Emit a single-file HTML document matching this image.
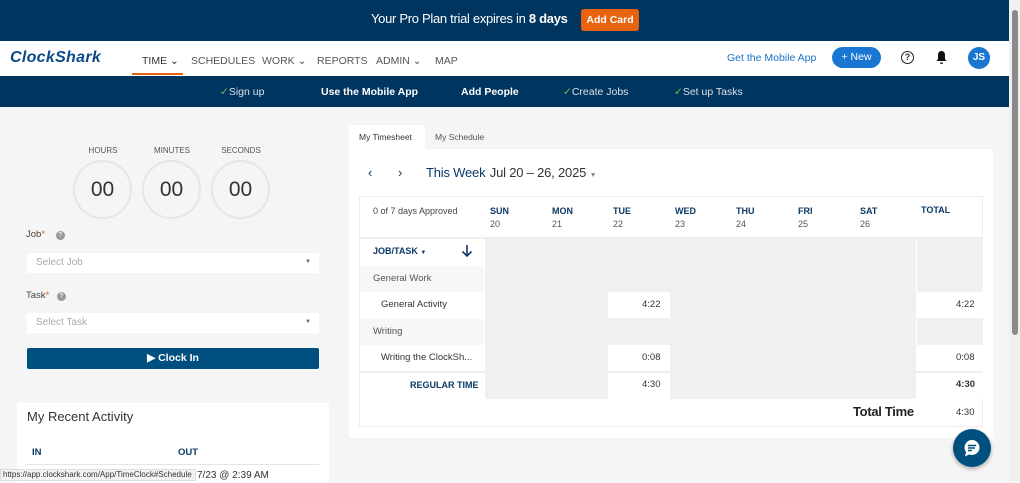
<!DOCTYPE html>
<html><head><meta charset="utf-8"><style>
*{box-sizing:border-box;margin:0;padding:0}
body{width:1020px;height:481px;overflow:hidden;background:#f5f5f5;font-family:"Liberation Sans",sans-serif;position:relative;color:#333}
.a{position:absolute}
.navy{background:#00355f}
.c{text-align:center}
.cell{position:absolute;background:#f0f0f0}
.w{background:#fff}
</style></head><body>
<div class="a navy" style="left:0;top:0;width:1009px;height:41px"></div>
<div class="a" style="left:371px;top:11px;font-size:13px;color:#fff;letter-spacing:-0.3px;white-space:nowrap">Your Pro Plan trial expires in <b>8 days</b></div>
<div class="a" style="left:581px;top:9px;width:58px;height:22px;background:#e8630f;border-radius:3px;color:#fff;font-size:10.5px;font-weight:bold;text-align:center;line-height:22px">Add Card</div>
<div class="a" style="left:0;top:41px;width:1009px;height:35px;background:#fff"></div>
<div class="a" style="left:10px;top:49px;font-size:16px;font-weight:bold;font-style:italic;color:#0b4a86;letter-spacing:0.3px">ClockShark</div>
<div class="a" style="left:142px;top:55px;font-size:10.5px;color:#333">TIME ⌄</div>
<div class="a" style="left:132px;top:73px;width:51px;height:2px;background:#e8630f"></div>
<div class="a" style="left:191px;top:55px;font-size:10.5px;color:#555">SCHEDULES</div>
<div class="a" style="left:262px;top:55px;font-size:10.5px;color:#555">WORK ⌄</div>
<div class="a" style="left:317px;top:55px;font-size:10.5px;color:#555">REPORTS</div>
<div class="a" style="left:376px;top:55px;font-size:10.5px;color:#555">ADMIN ⌄</div>
<div class="a" style="left:435px;top:55px;font-size:10.5px;color:#555">MAP</div>
<div class="a" style="left:727px;top:52px;font-size:10.5px;color:#1a73c8">Get the Mobile App</div>
<div class="a" style="left:832px;top:47px;width:49px;height:21px;border-radius:11px;background:#1976d2;color:#fff;font-size:10.5px;text-align:center;line-height:21px">+ New</div>
<div class="a" style="left:901px;top:51px;width:13px;height:13px;border:1.5px solid #222;border-radius:50%;font-size:9px;font-weight:bold;text-align:center;line-height:11px">?</div>
<svg class="a" style="left:935px;top:50px" width="13" height="15" viewBox="0 0 13 15"><path d="M6.5 1C4 1 3 3 3 5v4L1.5 11h10L10 9V5c0-2-1-4-3.5-4z M5 12.5h3a1.5 1.5 0 0 1-3 0z" fill="#111"/></svg>
<div class="a" style="left:968px;top:47px;width:22px;height:22px;border-radius:50%;background:#1976d2;color:#fff;font-size:10px;font-weight:bold;text-align:center;line-height:22px">JS</div>
<div class="a navy" style="left:0;top:76px;width:1009px;height:31px"></div>
<div class="a" style="left:220px;top:86px;font-size:10.5px;color:#d8e0ea"><span style="color:#6cc04a">✓</span>Sign up</div>
<div class="a" style="left:321px;top:86px;font-size:10.5px;color:#fff;font-weight:bold">Use the Mobile App</div>
<div class="a" style="left:461px;top:86px;font-size:10.5px;color:#fff;font-weight:bold">Add People</div>
<div class="a" style="left:563px;top:86px;font-size:10.5px;color:#d8e0ea"><span style="color:#6cc04a">✓</span>Create Jobs</div>
<div class="a" style="left:674px;top:86px;font-size:10.5px;color:#d8e0ea"><span style="color:#6cc04a">✓</span>Set up Tasks</div>
<div class="a" style="left:1009px;top:0;width:11px;height:481px;background:#f0f0f0"></div>
<div class="a" style="left:1012px;top:10px;width:6px;height:325px;background:#8a8a8a;border-radius:3px"></div>

<div class="a c" style="left:73px;top:146px;width:60px;font-size:8px;color:#555">HOURS</div>
<div class="a c" style="left:142px;top:146px;width:60px;font-size:8px;color:#555">MINUTES</div>
<div class="a c" style="left:211px;top:146px;width:60px;font-size:8px;color:#555">SECONDS</div>
<div class="a c" style="left:73px;top:160px;width:59px;height:59px;border:2px solid #e6e6e6;border-radius:50%;font-size:21px;line-height:55px">00</div>
<div class="a c" style="left:142px;top:160px;width:59px;height:59px;border:2px solid #e6e6e6;border-radius:50%;font-size:21px;line-height:55px">00</div>
<div class="a c" style="left:211px;top:160px;width:59px;height:59px;border:2px solid #e6e6e6;border-radius:50%;font-size:21px;line-height:55px">00</div>
<div class="a" style="left:26px;top:229px;font-size:9.5px;color:#444">Job<span style="color:#e8630f">*</span> <span style="display:inline-block;margin-left:8px;width:9px;height:9px;border-radius:50%;background:#999;color:#fff;font-size:7px;text-align:center;line-height:9px">?</span></div>
<div class="a" style="left:27px;top:253px;width:292px;height:20px;background:#fff;font-size:10px;color:#aaa;padding:4px 0 0 9px">Select Job<span style="position:absolute;right:8px;top:6px;font-size:6px;color:#666">▼</span></div>
<div class="a" style="left:26px;top:290px;font-size:9.5px;color:#444">Task<span style="color:#e8630f">*</span> <span style="display:inline-block;margin-left:5px;width:9px;height:9px;border-radius:50%;background:#999;color:#fff;font-size:7px;text-align:center;line-height:9px">?</span></div>
<div class="a" style="left:27px;top:313px;width:292px;height:20px;background:#fff;font-size:10px;color:#aaa;padding:4px 0 0 9px">Select Task<span style="position:absolute;right:8px;top:6px;font-size:6px;color:#666">▼</span></div>
<div class="a c" style="left:27px;top:348px;width:292px;height:21px;background:#00507f;border-radius:2px;color:#fff;font-size:10.5px;font-weight:bold;line-height:21px">▶ Clock In</div>
<div class="a" style="left:17px;top:403px;width:312px;height:80px;background:#fff"></div>
<div class="a" style="left:27px;top:409px;font-size:13px;color:#333">My Recent Activity</div>
<div class="a" style="left:32px;top:447px;font-size:9.5px;color:#0b3a66;font-weight:bold">IN</div>
<div class="a" style="left:178px;top:447px;font-size:9.5px;color:#0b3a66;font-weight:bold">OUT</div>
<div class="a" style="left:27px;top:464px;width:292px;height:1px;background:#e5e5e5"></div>
<div class="a" style="left:0;top:469px;width:196px;height:12px;background:#f3f3f3;border:1px solid #ddd;font-size:8px;color:#333;padding-left:2px;line-height:10px">https://app.clockshark.com/App/TimeClock#Schedule</div>
<div class="a" style="left:197px;top:470px;font-size:10px;color:#333">7/23 @ 2:39 AM</div>

<div class="a w" style="left:349px;top:125px;width:76px;height:25px;font-size:8.5px;color:#333;padding:7px 0 0 10px">My Timesheet</div>
<div class="a" style="left:435px;top:132px;font-size:8.5px;color:#555">My Schedule</div>
<div class="a w" style="left:349px;top:149px;width:644px;height:289px"></div>
<div class="a" style="left:368px;top:165px;font-size:13px;color:#0b3a66">‹</div>
<div class="a" style="left:398px;top:165px;font-size:13px;color:#0b3a66">›</div>
<div class="a" style="left:426px;top:165px;font-size:13px;color:#0b3a66;letter-spacing:-0.2px">This Week <span style="color:#333;margin-left:1px">Jul 20 – 26, 2025</span> <span style="font-size:7px;color:#888">▼</span></div>
<div class="a" style="left:359px;top:196px;width:624px;height:231px;border:1px solid #eee"></div>
<div class="a" style="left:373px;top:206px;font-size:9px;color:#444">0 of 7 days Approved</div>
<div class="a" style="left:490px;top:205px;font-size:9px;line-height:13px;color:#0b3a66"><b>SUN</b><br><span style="color:#555">20</span></div>
<div class="a" style="left:552px;top:205px;font-size:9px;line-height:13px;color:#0b3a66"><b>MON</b><br><span style="color:#555">21</span></div>
<div class="a" style="left:613px;top:205px;font-size:9px;line-height:13px;color:#0b3a66"><b>TUE</b><br><span style="color:#555">22</span></div>
<div class="a" style="left:675px;top:205px;font-size:9px;line-height:13px;color:#0b3a66"><b>WED</b><br><span style="color:#555">23</span></div>
<div class="a" style="left:736px;top:205px;font-size:9px;line-height:13px;color:#0b3a66"><b>THU</b><br><span style="color:#555">24</span></div>
<div class="a" style="left:798px;top:205px;font-size:9px;line-height:13px;color:#0b3a66"><b>FRI</b><br><span style="color:#555">25</span></div>
<div class="a" style="left:860px;top:205px;font-size:9px;line-height:13px;color:#0b3a66"><b>SAT</b><br><span style="color:#555">26</span></div>
<div class="a" style="left:921px;top:205px;font-size:9px;color:#0b3a66;font-weight:bold">TOTAL</div>
<div class="a" style="left:359px;top:237px;width:624px;height:2px;background:#eee"></div>
<div class="cell" style="left:485px;top:239px;width:431px;height:133px"></div>
<div class="cell" style="left:917px;top:239px;width:66px;height:133px"></div>
<div class="cell" style="left:485px;top:373px;width:431px;height:26px"></div>
<div class="cell" style="left:360px;top:266px;width:124px;height:26px;background:#f7f7f7"></div>
<div class="cell" style="left:360px;top:319px;width:124px;height:26px;background:#f7f7f7"></div>
<div class="cell w" style="left:608px;top:292px;width:62px;height:26px"></div>
<div class="cell w" style="left:917px;top:292px;width:66px;height:26px"></div>
<div class="cell w" style="left:608px;top:345px;width:62px;height:26px"></div>
<div class="cell w" style="left:917px;top:345px;width:66px;height:26px"></div>
<div class="cell w" style="left:608px;top:373px;width:62px;height:26px"></div>
<div class="cell w" style="left:917px;top:373px;width:66px;height:26px"></div>
<div class="a" style="left:359px;top:371px;width:624px;height:2px;background:#eee"></div>
<div class="a" style="left:373px;top:246px;font-size:9px;color:#0b3a66;font-weight:bold">JOB/TASK <span style="font-size:6px">▼</span></div>
<svg class="a" style="left:461px;top:244px" width="12" height="13" viewBox="0 0 12 13"><path d="M6 1v11M1.5 7.5 6 12l4.5-4.5" stroke="#0b3a66" stroke-width="1.6" fill="none"/></svg>
<div class="a" style="left:373px;top:273px;font-size:9.5px;color:#555">General Work</div>
<div class="a" style="left:381px;top:299px;font-size:9.5px;color:#333">General Activity</div>
<div class="a" style="left:373px;top:326px;font-size:9.5px;color:#555">Writing</div>
<div class="a" style="left:381px;top:352px;font-size:9.5px;color:#333">Writing the ClockSh...</div>
<div class="a" style="left:410px;top:380px;font-size:9px;color:#0b3a66;font-weight:bold">REGULAR TIME</div>
<div class="a" style="left:642px;top:299px;font-size:9.5px">4:22</div>
<div class="a" style="left:956px;top:299px;font-size:9.5px">4:22</div>
<div class="a" style="left:642px;top:352px;font-size:9.5px">0:08</div>
<div class="a" style="left:956px;top:352px;font-size:9.5px">0:08</div>
<div class="a" style="left:642px;top:379px;font-size:9.5px">4:30</div>
<div class="a" style="left:956px;top:379px;font-size:9.5px;font-weight:bold">4:30</div>
<div class="a" style="left:853px;top:404px;font-size:13px;font-weight:bold;color:#222;letter-spacing:-0.3px">Total Time</div>
<div class="a" style="left:956px;top:407px;font-size:9.5px">4:30</div>
<div class="a" style="left:953px;top:429px;width:38px;height:38px;border-radius:50%;background:#00507f;box-shadow:0 2px 4px rgba(0,0,0,.3)"></div>
<svg class="a" style="left:961px;top:437px" width="22" height="22" viewBox="0 0 22 22"><circle cx="11" cy="10.5" r="7.5" fill="#fff"/><path d="M5 15 L4 19.5 L9 17 Z" fill="#fff"/><path d="M7 8.5h8M7 11h7M7 13.5h4" stroke="#00507f" stroke-width="1.5"/></svg>
</body></html>
